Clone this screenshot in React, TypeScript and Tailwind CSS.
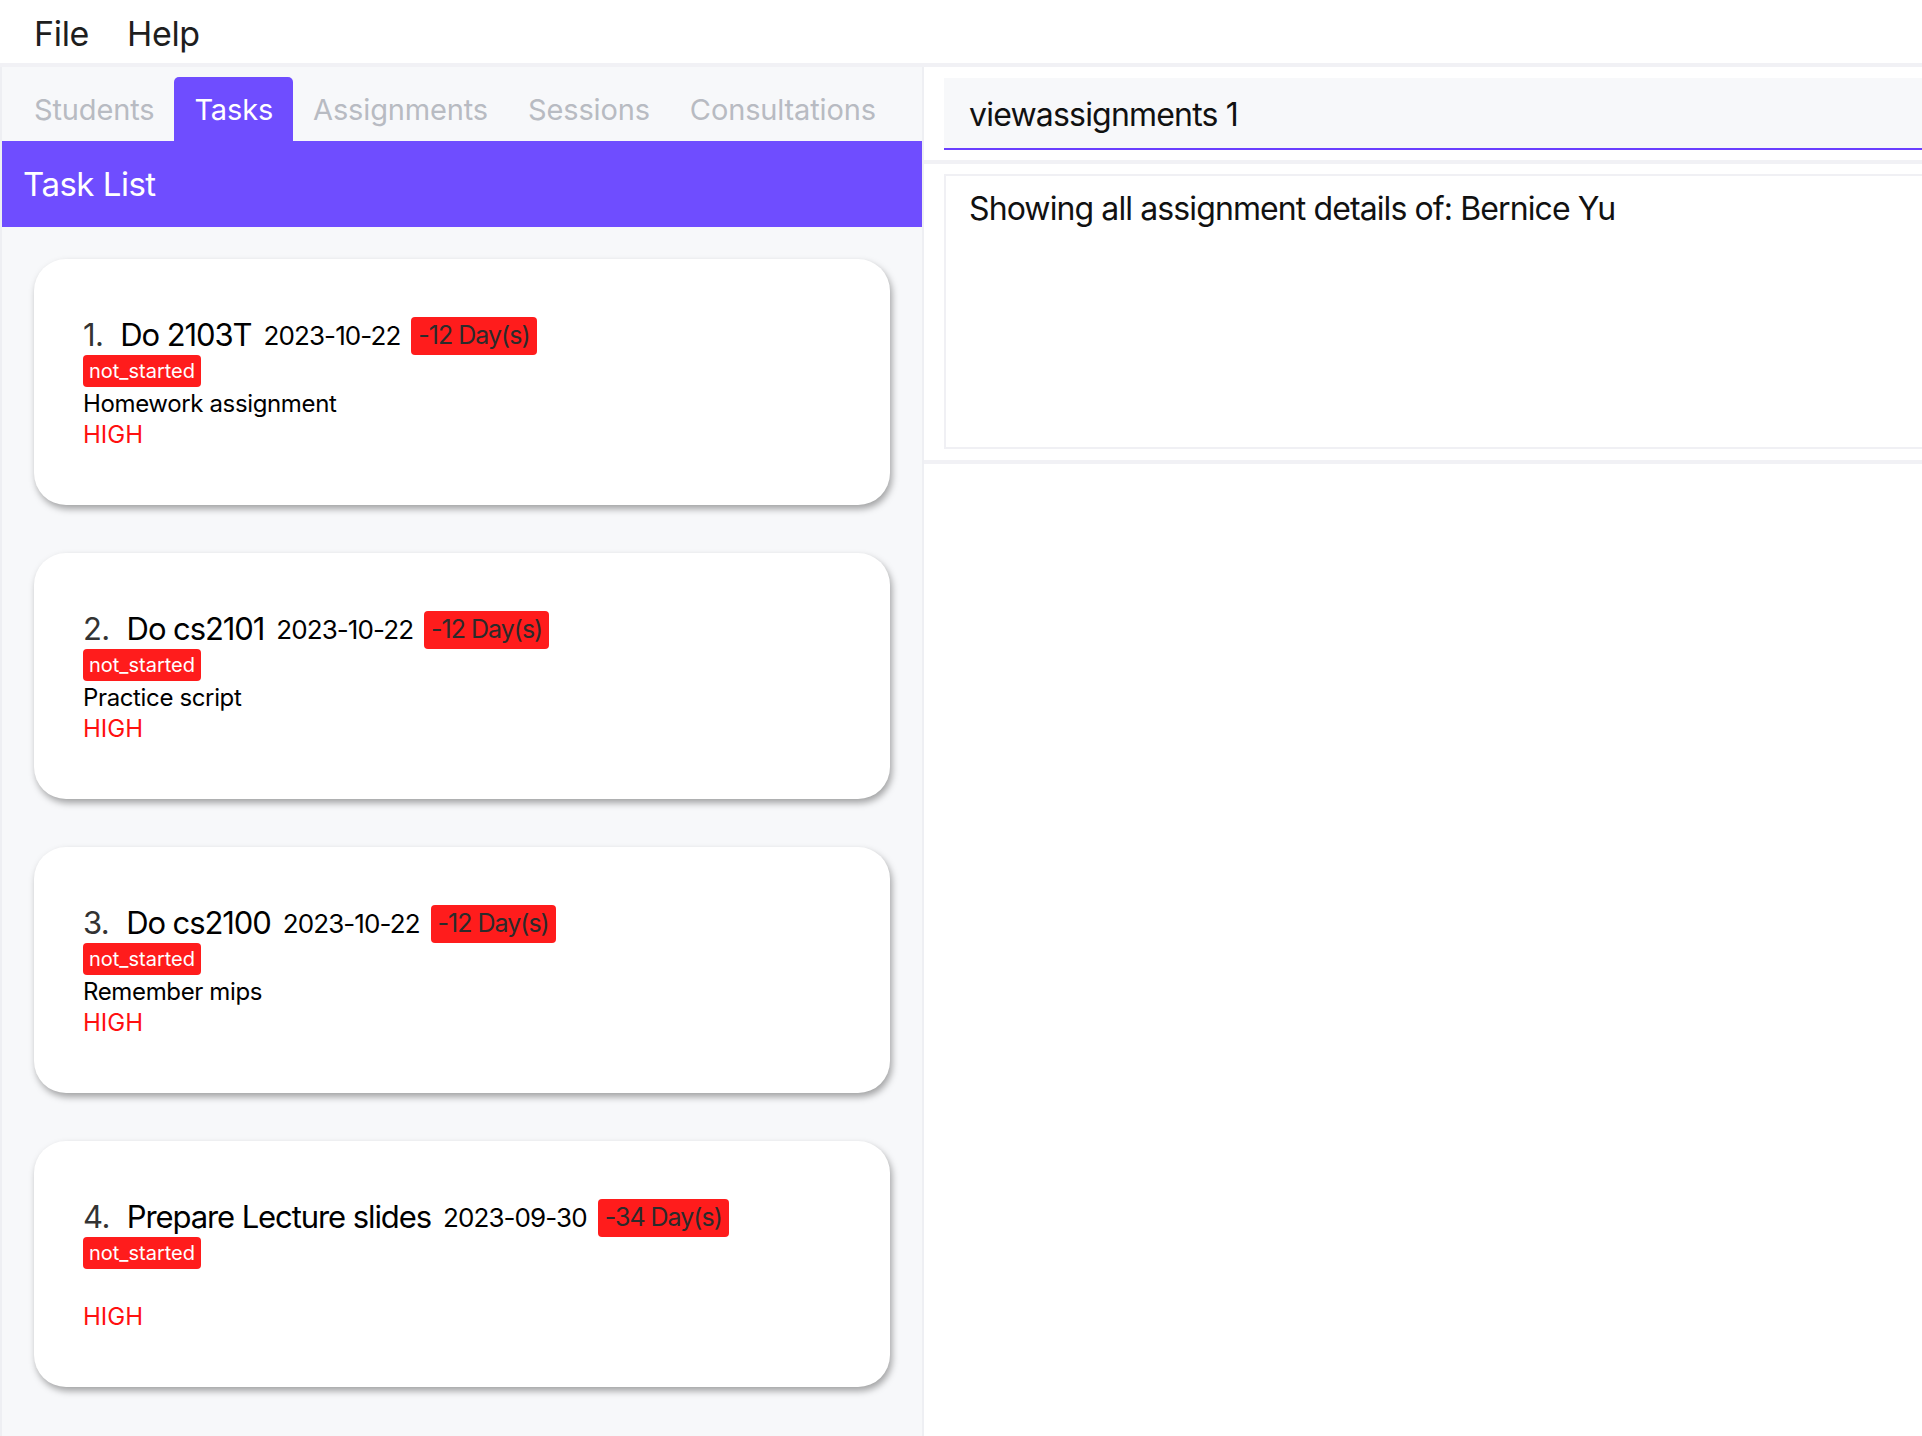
import React from 'react';

type Task = {
  id: number;
  title: string;
  date: string;
  days: string;
  status: string;
  description: string;
  priority: string;
};

const tasks: Task[] = [
  { id: 1, title: 'Do 2103T', date: '2023-10-22', days: '-12 Day(s)', status: 'not_started', description: 'Homework assignment', priority: 'HIGH' },
  { id: 2, title: 'Do cs2101', date: '2023-10-22', days: '-12 Day(s)', status: 'not_started', description: 'Practice script', priority: 'HIGH' },
  { id: 3, title: 'Do cs2100', date: '2023-10-22', days: '-12 Day(s)', status: 'not_started', description: 'Remember mips', priority: 'HIGH' },
  { id: 4, title: 'Prepare Lecture slides', date: '2023-09-30', days: '-34 Day(s)', status: 'not_started', description: '', priority: 'HIGH' },
];

const tabs = ['Students', 'Tasks', 'Assignments', 'Sessions', 'Consultations'];

function TaskCard({ task }: { task: Task }) {
  return (
    <div className="h-[246px] shrink-0 rounded-[32px] bg-white pl-[49px] pt-[57px] shadow-[2px_4px_7px_rgba(0,0,0,0.35)]">
      <div className="flex h-[38px] items-center pt-[1px]">
        <span className="mr-[17px] text-[31px] tracking-[-0.02em] text-[#333333]">{task.id}.</span>
        <span className="text-[31px] tracking-[-0.035em] text-black">{task.title}</span>
        <span className="ml-[12px] text-[26px] tracking-[-0.035em] text-black">{task.date}</span>
        <span className="ml-[11px] flex h-[38px] items-center rounded-[4px] bg-[#ff1c1c] px-[7px] text-[25px] tracking-[-0.04em] text-[#2b2b2b]">
          {task.days}
        </span>
      </div>
      <div className="mt-[1px] flex">
        <span className="flex h-[32px] items-center rounded-[4px] bg-[#ff1c1c] px-[6px] text-[20px] text-white">
          {task.status}
        </span>
      </div>
      <div className="h-[31px] pt-[1px] text-[24px] leading-[31px] tracking-[-0.015em] text-black">{task.description}</div>
      <div className="h-[31px] pt-[1px] text-[24px] leading-[31px] text-[#ff1010]">{task.priority}</div>
    </div>
  );
}

export default function App() {
  return (
    <div className="flex h-[1436px] w-[1922px] flex-col overflow-hidden bg-white font-['Inter',sans-serif]">
      {/* Menu bar */}
      <div className="flex h-[63px] items-center pt-[3px] text-[34px] tracking-[-0.01em] text-[#1e1e1e]">
        <span className="ml-[34px]">File</span>
        <span className="ml-[38px]">Help</span>
      </div>
      <div className="h-[4px] bg-[#f1f1f5]" />

      <div className="flex min-h-0 flex-1">
        {/* Left pane */}
        <div className="flex w-[924px] flex-col border-l-2 border-r-2 border-[#eeeff3] bg-[#f7f8fa]">
          <div className="flex h-[74px] items-end pl-[12px]">
            {tabs.map((t) => (
              <div
                key={t}
                className={
                  t === 'Tasks'
                    ? 'flex h-[64px] items-center rounded-t-[5px] bg-[#6f4dff] px-[20px] pt-[2px] text-[29px] tracking-[-0.005em] text-white'
                    : 'flex h-[64px] items-center px-[20px] pt-[2px] text-[29px] tracking-[-0.005em] text-[#b8bbc2]'
                }
              >
                {t}
              </div>
            ))}
          </div>
          <div className="flex h-[86px] items-center bg-[#6f4dff] pl-[21px] pt-[2px] text-[33px] tracking-[-0.015em] text-white">
            Task List
          </div>
          <div className="flex flex-col gap-[48px] px-[32px] pt-[32px]">
            {tasks.map((t) => (
              <TaskCard key={t.id} task={t} />
            ))}
          </div>
        </div>

        {/* Right pane */}
        <div className="flex flex-1 flex-col">
          <div className="h-[93px] pl-[20px] pt-[11px]">
            <div className="flex h-[72px] items-center border-b-2 border-[#6a3fff] bg-[#f7f8fa] pl-[25px] pt-[3px] text-[32px] tracking-[-0.025em] text-[#111111]">
              viewassignments 1
            </div>
          </div>
          <div className="h-[4px] bg-[#f1f1f5]" />
          <div className="pb-[11px] pl-[20px] pt-[10px]">
            <div className="h-[275px] border-2 border-r-0 border-[#f0f0f4] bg-white pl-[23px] pt-[9px] text-[32px] tracking-[-0.028em] text-[#111111]">
              Showing all assignment details of: Bernice Yu
            </div>
          </div>
          <div className="h-[4px] bg-[#f1f1f5]" />
        </div>
      </div>
    </div>
  );
}
